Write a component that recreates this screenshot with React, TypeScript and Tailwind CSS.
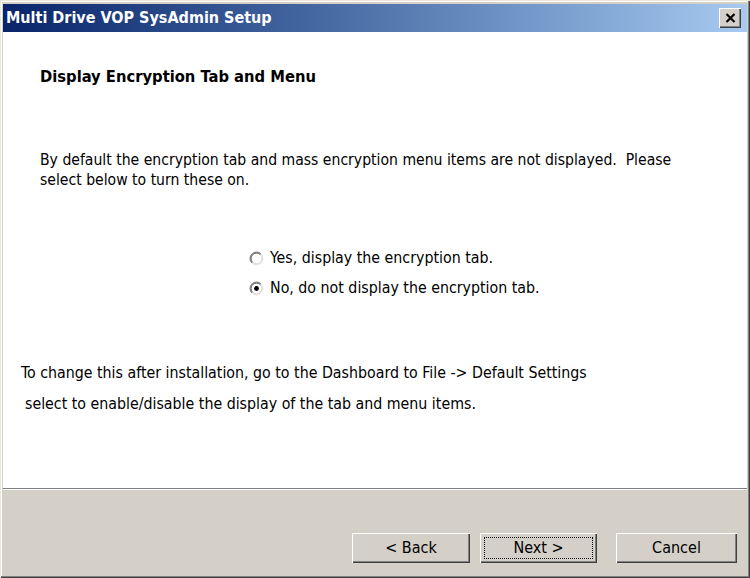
import type { ReactNode } from 'react'

const font = { fontFamily: '"DejaVu Sans Condensed", "DejaVu Sans", sans-serif' }

function Radio({ checked, label }: { checked: boolean; label: string }): React.JSX.Element {
  return (
    <div className="flex h-[20px] items-center gap-[6px]">
      <svg width="15" height="15" viewBox="0 0 15 15" className="shrink-0">
        <circle cx="7.5" cy="7.5" r="6.5" fill="#fff" />
        <path d="M2.9 12.1 A6.5 6.5 0 0 1 12.1 2.9" fill="none" stroke="#808080" strokeWidth="1" />
        <path d="M3.6 11.4 A5.5 5.5 0 0 1 11.4 3.6" fill="none" stroke="#404040" strokeWidth="1" />
        <path d="M12.1 2.9 A6.5 6.5 0 0 1 2.9 12.1" fill="none" stroke="#e8e8e8" strokeWidth="1" />
        <path d="M11.4 3.6 A5.5 5.5 0 0 1 3.6 11.4" fill="none" stroke="#d4d0c8" strokeWidth="1" />
        {checked && <circle cx="7.5" cy="7.5" r="2.4" fill="#000" />}
      </svg>
      <span className="text-[15.8px] text-black">{label}</span>
    </div>
  )
}

function Button({ children, focused }: { children: ReactNode; focused?: boolean }): React.JSX.Element {
  return (
    <button
      type="button"
      className="relative flex h-[30px] w-full items-center justify-center bg-[#d4d0c8] text-[16px] text-black shadow-[inset_1px_1px_#fff,inset_-1px_-1px_#404040,inset_-2px_-2px_#808080]"
    >
      {focused && <span className="absolute inset-[4px] border border-dotted border-black" />}
      {children}
    </button>
  )
}

export default function App(): React.JSX.Element {
  return (
    <div
      style={font}
      className="flex h-[578px] w-[750px] flex-col bg-[#d4d0c8] p-[3px] shadow-[inset_1px_1px_#ece9d8,inset_-1px_-1px_#404040,inset_-2px_-2px_#808080,inset_2px_2px_#fff]"
    >
      <div className="mt-[1px] flex h-[28px] items-center justify-between bg-gradient-to-r from-[#0a246a] to-[#a6caf0] pl-[3px] pr-[6px]">
        <span className="text-[16px] font-bold text-white">Multi Drive VOP SysAdmin Setup</span>
        <div className="flex h-[20px] w-[22px] items-center justify-center bg-[#d4d0c8] shadow-[inset_1px_1px_#fff,inset_-1px_-1px_#404040,inset_-2px_-2px_#808080]">
          <svg width="11" height="10" viewBox="0 0 11 10">
            <path d="M1.5 1 L9.5 9 M9.5 1 L1.5 9" stroke="#000" strokeWidth="2.2" />
          </svg>
        </div>
      </div>

      <div className="flex h-[456px] flex-col bg-white px-[18px] pt-[35px] text-black">
        <h1 className="ml-[19px] h-[20px] text-[16.4px] font-bold leading-[20px]">Display Encryption Tab and Menu</h1>

        <p className="ml-[19px] mt-[63px] text-[15.6px] leading-[20px]">
          By default the encryption tab and mass encryption menu items are not displayed.&nbsp; Please
          <br />
          select below to turn these on.
        </p>

        <div className="ml-[228px] mt-[58px] flex flex-col gap-[10px]">
          <Radio checked={false} label="Yes, display the encryption tab." />
          <Radio checked label="No, do not display the encryption tab." />
        </div>

        <p className="mt-[65px] h-[20px] text-[15.8px] leading-[20px]">
          To change this after installation, go to the Dashboard to File -&gt; Default Settings
        </p>
        <p className="ml-[4px] mt-[11px] h-[20px] text-[15.8px] leading-[20px]">
          select to enable/disable the display of the tab and menu items.
        </p>
      </div>

      <div className="h-[2px] border-t border-b border-t-[#808080] border-b-white" />

      <div className="flex h-[85px] justify-end gap-[10px] pr-[10px] pt-[43px]">
        <div className="w-[118px]">
          <Button>&lt; Back</Button>
        </div>
        <div className="mr-[9px] w-[117px]">
          <Button focused>Next &gt;</Button>
        </div>
        <div className="w-[121px]">
          <Button>Cancel</Button>
        </div>
      </div>
    </div>
  )
}
